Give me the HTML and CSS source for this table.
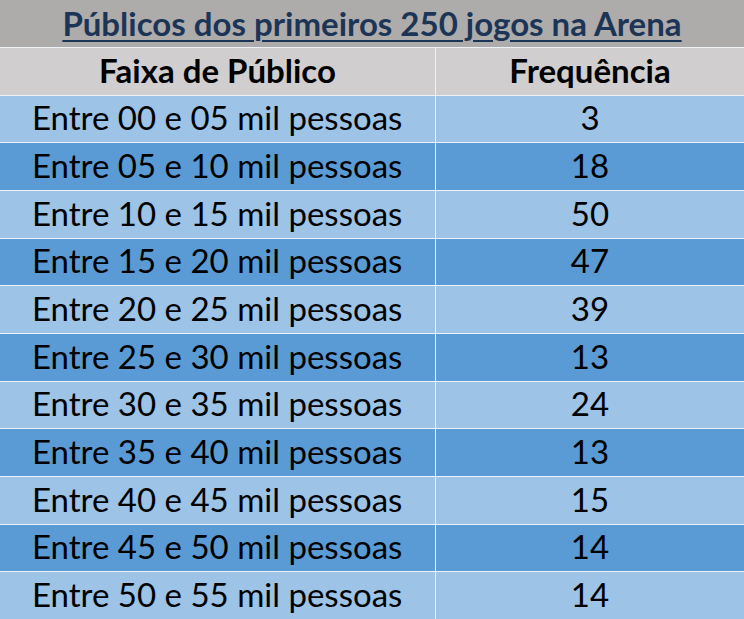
FILE: index.html
```html
<!DOCTYPE html>
<html lang="pt">
<head>
<meta charset="utf-8">
<title>Públicos dos primeiros 250 jogos na Arena</title>
<link rel="stylesheet" href="styles.css">
</head>
<body>
<div class="table">
  <div class="title"><span>Públicos dos primeiros 250 jogos na Arena</span></div>
  <div class="head">Faixa de Público</div>
  <div class="head">Frequência</div>

  <div class="cell range light">Entre 00 e 05 mil pessoas</div><div class="cell num light">3</div>
  <div class="cell range dark">Entre 05 e 10 mil pessoas</div><div class="cell num dark">18</div>
  <div class="cell range light">Entre 10 e 15 mil pessoas</div><div class="cell num light">50</div>
  <div class="cell range dark">Entre 15 e 20 mil pessoas</div><div class="cell num dark">47</div>
  <div class="cell range light">Entre 20 e 25 mil pessoas</div><div class="cell num light">39</div>
  <div class="cell range dark">Entre 25 e 30 mil pessoas</div><div class="cell num dark">13</div>
  <div class="cell range light">Entre 30 e 35 mil pessoas</div><div class="cell num light">24</div>
  <div class="cell range dark">Entre 35 e 40 mil pessoas</div><div class="cell num dark">13</div>
  <div class="cell range light">Entre 40 e 45 mil pessoas</div><div class="cell num light">15</div>
  <div class="cell range dark">Entre 45 e 50 mil pessoas</div><div class="cell num dark">14</div>
  <div class="cell range light">Entre 50 e 55 mil pessoas</div><div class="cell num light">14</div>
</div>
</body>
</html>
```

FILE: styles.css
```css
html, body {
  margin: 0;
  padding: 0;
  background: #ffffff;
}
.table {
  width: 744px;
  height: 619px;
  display: grid;
  grid-template-columns: 435px 1fr;
  grid-template-rows: 47px repeat(12, 1fr);
  gap: 1px;
  background: #eef2f6;
  font-family: "Lato", "Open Sans", sans-serif;
  color: #000;
}
.title {
  grid-column: 1 / -1;
  background: #aeabab;
  display: flex;
  align-items: center;
  justify-content: center;
  font-weight: bold;
  font-size: 33px;
  color: #1c3557;
  padding-bottom: 2px;
}
.title span {
  text-decoration: underline;
  text-decoration-thickness: 2px;
  text-underline-offset: 4px;
}
.head {
  background: #d0cece;
  display: flex;
  align-items: center;
  justify-content: center;
  font-weight: bold;
  font-size: 33px;
  padding-bottom: 3px;
}
.cell {
  display: flex;
  align-items: center;
  font-size: 33px;
  padding-bottom: 3px;
}
.range {
  padding-left: 32px;
}
.num {
  justify-content: center;
}
.light { background: #9dc3e6; }
.dark { background: #5b9bd5; }
```
